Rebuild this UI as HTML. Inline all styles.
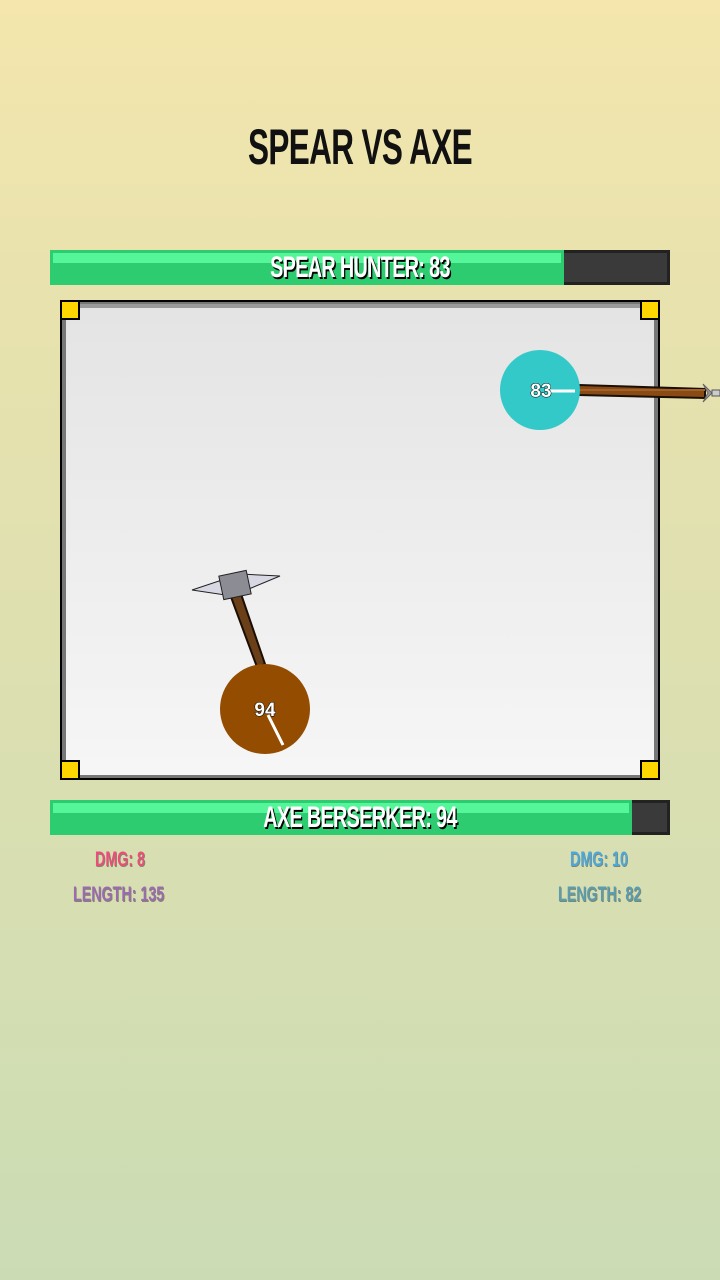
<!DOCTYPE html>
<html><head><style>
body{margin:0;width:720px;height:1280px;overflow:hidden;background:linear-gradient(#f4e6ad,#e8e2ae 300px,#cbdcb4 1280px);font-family:"Liberation Sans Narrow","Liberation Sans",sans-serif;position:relative}
.t{position:absolute;left:0;width:720px;text-align:center;font-weight:bold;white-space:nowrap}
.bar{position:absolute;left:50px;width:620px;height:35px;background:#3a3a3a;box-sizing:border-box;border:3px solid #222}
.fill{position:absolute;left:-3px;top:-3px;height:35px;background:#2ecc71}
.fill i{position:absolute;left:3px;right:3px;top:3px;height:10px;background:#55f59a}
.bt{position:absolute;left:0;top:0;width:620px;height:35px;line-height:35px;text-align:center;color:#fff;font-size:30px;font-weight:bold;text-shadow:2px 2px 0 #000;letter-spacing:-1px;transform:scaleX(.66)}
.c{position:absolute;width:16px;height:16px;background:#ffd700;border:2px solid #000}
.s{position:absolute;font-size:21px;font-weight:bold;transform:scaleX(.68);transform-origin:left;text-shadow:1px 1px 0 rgba(0,0,0,.4)}
</style></head><body>
<div class="t" style="top:118px;font-size:50px;color:#111;transform:scaleX(.63);letter-spacing:-1px">SPEAR VS AXE</div>
<div class="bar" style="top:250px"><div class="fill" style="width:514px"><i></i></div><div class="bt" style="left:-3px;top:-3px">SPEAR HUNTER: 83</div></div>
<div style="position:absolute;left:60px;top:300px;width:600px;height:480px;box-sizing:border-box;border:2px solid #000;background:#777">
<div style="position:absolute;left:4px;top:2px;right:4px;bottom:3px;background:linear-gradient(#e4e4e4,#f6f6f6);border-top:4px solid #9a9a9a;box-sizing:border-box"></div>
</div>
<div class="c" style="left:60px;top:300px"></div><div class="c" style="left:640px;top:300px"></div>
<div class="c" style="left:60px;top:760px"></div><div class="c" style="left:640px;top:760px"></div>
<svg width="720" height="1280" style="position:absolute;left:0;top:0">
<path d="M579 385 L705 389 L705 398 L579 395Z" fill="#8a4a14" stroke="#1a0e05" stroke-width="2"/>
<rect x="580" y="389" width="125" height="2" fill="#a0622a"/>
<path d="M703 384 L712 393 L703 402 L708 393Z" fill="#999" stroke="#666"/>
<rect x="712" y="390" width="8" height="6" fill="#ccc" stroke="#555"/>
<path d="M192 590 L240 574 L280 576 L232 596Z" fill="#d8d8e4" stroke="#222" stroke-width="1"/>
<path d="M231 597 L257 667 L265 664 L241 594Z" fill="#6b3f18" stroke="#1a0e05" stroke-width="2"/>
<rect x="221" y="573" width="28" height="24" fill="#8c8c94" stroke="#222" transform="rotate(-12 235 585)"/>
<circle cx="540" cy="390" r="40" fill="#33c9c9"/>
<line x1="550" y1="391" x2="575" y2="391" stroke="#fff" stroke-width="3"/>
<circle cx="265" cy="709" r="45" fill="#944c00"/>
<line x1="268" y1="715" x2="283" y2="745" stroke="#fff" stroke-width="3"/>
<g font-family="Liberation Sans" font-weight="bold" font-size="19" fill="#fff" text-anchor="middle" style="paint-order:stroke" stroke="#000" stroke-width="1">
<text x="541" y="397">83</text><text x="265" y="716">94</text></g>
</svg>
<div class="bar" style="top:800px"><div class="fill" style="width:582px"><i></i></div><div class="bt" style="left:-3px;top:-3px">AXE BERSERKER: 94</div></div>
<div class="s" style="left:95px;top:848px;color:#e8507a">DMG: 8</div>
<div class="s" style="left:73px;top:883px;color:#9b6bb0">LENGTH: 135</div>
<div class="s" style="left:570px;top:848px;color:#4aa8dc">DMG: 10</div>
<div class="s" style="left:558px;top:883px;color:#5a9cb0">LENGTH: 82</div>
</body></html>
